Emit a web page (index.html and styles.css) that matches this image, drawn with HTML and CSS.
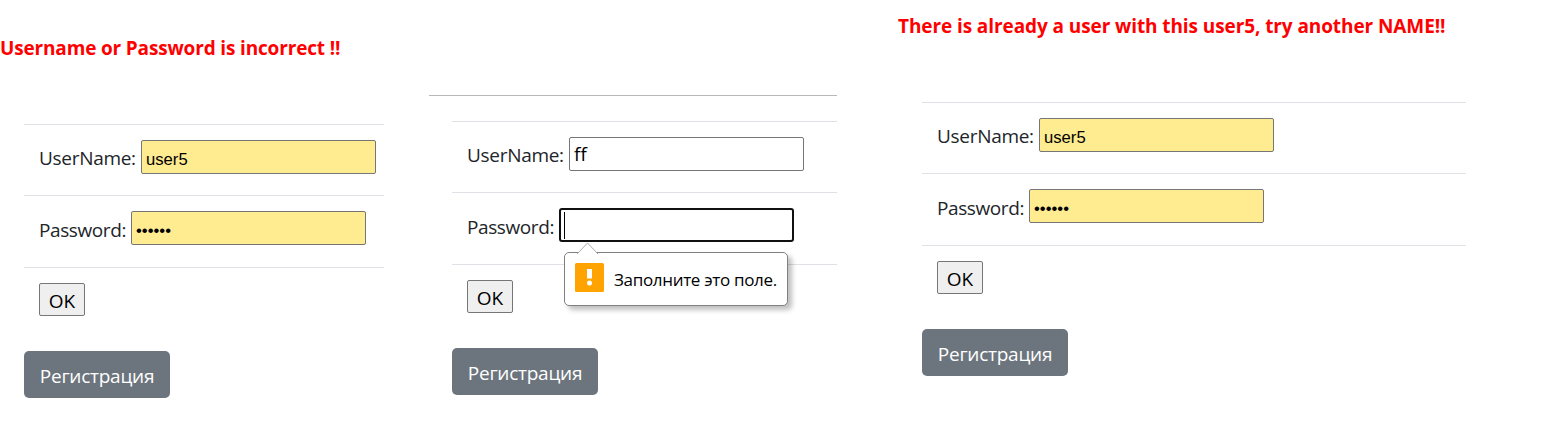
FILE: index.html
```
<!DOCTYPE html>
<html lang="ru">
<head>
<meta charset="utf-8">
<title>Login</title>
<link rel="stylesheet" href="styles.css">
</head>
<body>
<main class="screens">
  <section class="screen screen-login">
    <p class="error"><span class="error-login">Username or Password is incorrect !!</span></p>
    <form class="form">
      <div class="row"><label class="label user">UserName:</label><input class="field filled" type="text" value="user5"></div>
      <div class="row row-password"><label class="label pass">Password:</label><input class="field filled" type="password" value="123456"></div>
      <div class="row row-submit"><button class="ok" type="button">OK</button></div>
      <a class="register">Регистрация</a>
    </form>
  </section>
  <section class="screen screen-empty">
    <form class="form">
      <div class="row"><label class="label user">UserName:</label><input class="field" type="text" value="ff"></div>
      <div class="row row-password"><label class="label pass">Password:</label>
        <div class="field focused"><span class="caret"></span>
          <div class="tooltip">
            <svg class="arrow" width="22" height="12" viewBox="0 0 22 12"><path d="M0 12L10.5 1L21 12" fill="#fff" stroke="#aaa"/></svg>
            <svg class="warning" width="29" height="29" viewBox="0 0 29 29"><rect width="29" height="29" rx="1.5" fill="#ffa300"/><path d="M12 6h5v9.500h-5z" fill="#fff"/><circle cx="14.5" cy="20" r="2.500" fill="#fff"/></svg>
            <span class="message">Заполните это поле.</span>
          </div>
        </div>
      </div>
      <div class="row row-submit"><button class="ok" type="button">OK</button></div>
      <a class="register">Регистрация</a>
    </form>
  </section>
  <section class="screen screen-signup">
    <p class="error"><span class="error-signup">There is already a user with this user5, try another NAME!!</span></p>
    <form class="form">
      <div class="row"><label class="label user">UserName:</label><input class="field filled" type="text" value="user5"></div>
      <div class="row row-password"><label class="label pass">Password:</label><input class="field filled" type="password" value="123456"></div>
      <div class="row row-submit"><button class="ok" type="button">OK</button></div>
      <a class="register">Регистрация</a>
    </form>
  </section>
</main>
</body>
</html>
```
FILE: styles.css
```
* { box-sizing: border-box; }
body {
  margin: 0;
  background: #fff;
  color: #212529;
  font: 19px/30px "Open Sans", "Noto Sans", sans-serif;
}
.screens { display: flex; align-items: flex-start; height: 427px; overflow: hidden; }
.screen { flex: none; }
.screen-login { width: 384px; margin-right: 45px; padding-top: 33px; }
.screen-empty { width: 408px; margin: 95px 61px 0 0; padding-top: 25px; border-top: 1px solid #b8b8b8; }
.screen-signup { width: 568px; padding-top: 11px; }
.error { height: 30px; margin: 0 0 61px; color: #f00; font-weight: 700; white-space: nowrap; }
.error-login { letter-spacing: -0.16px; }
.error-signup { letter-spacing: -0.09px; }
.form { margin-left: 24px; }
.screen-empty .form { margin-left: 23px; }
.row {
  display: flex;
  align-items: flex-start;
  height: 71px;
  padding: 15px 0 0 15px;
  border-top: 1px solid #dee2e6;
}
.row-password { height: 72px; }
.row-submit { height: 84px; }
.label { flex: none; height: 34px; line-height: 36px; white-space: nowrap; letter-spacing: -0.3px; }
.user { width: 102px; }
.pass { width: 92px; line-height: 38px; letter-spacing: -0.4px; }
.field {
  display: block;
  width: 235px;
  height: 34px;
  margin: 0;
  padding: 1px 4px;
  border: 1px solid #767676;
  border-radius: 2px;
  background: #fff;
  color: #000;
  font: 19px "Open Sans", "Noto Sans", sans-serif;
  outline: none;
}
.filled { padding-top: 7px; background: #ffeb90; font: 16.67px "Liberation Sans", Arial, sans-serif; }
.focused { position: relative; padding: 2px 3px; border: 2px solid #101010; border-radius: 3px; }
.caret { display: block; width: 1px; height: 27px; background: #000; }
.ok {
  width: 46px;
  height: 33px;
  padding: 3px 0 0;
  border: 1px solid #767676;
  border-radius: 2px;
  background: #efefef;
  color: #000;
  font: 19px/27px "Open Sans", "Noto Sans", sans-serif;
}
.register {
  display: block;
  width: 146px;
  height: 47px;
  border-radius: 5px;
  background: #6c757d;
  color: #fff;
  line-height: 50px;
  text-align: center;
  letter-spacing: -0.25px;
}
.tooltip {
  position: absolute;
  left: 3px;
  top: 42px;
  z-index: 1;
  display: flex;
  align-items: center;
  gap: 10px;
  width: 224px;
  height: 54px;
  padding: 0 10px;
  border: 1px solid #808080;
  border-radius: 5px;
  background: #fff;
  box-shadow: 4px 4px 5px rgba(0, 0, 0, .25);
}
.arrow { position: absolute; left: 12px; top: -11px; }
.warning { flex: none; margin-bottom: 3px; }
.message { font-size: 17px; letter-spacing: -0.32px; white-space: nowrap; }
```
